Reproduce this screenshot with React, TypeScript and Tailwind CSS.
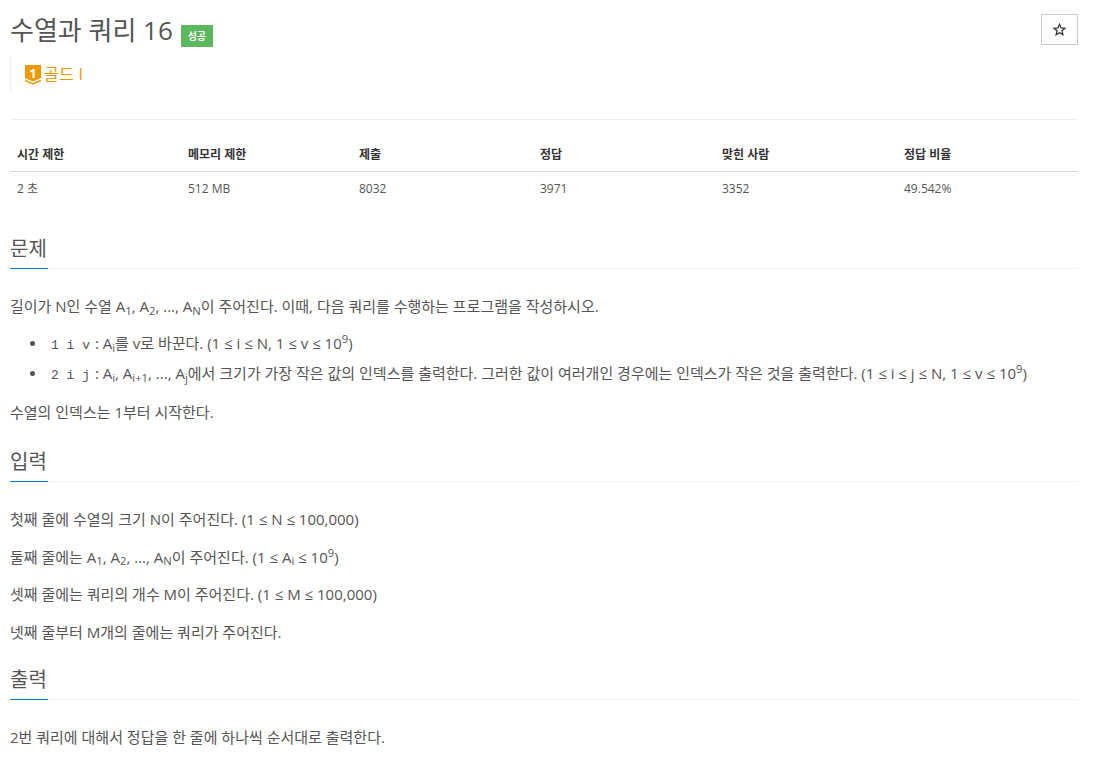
const sans = "font-['Open_Sans','Noto_Sans_CJK_KR',sans-serif]";

const stats = [
  { name: "시간 제한", value: "2 초", width: "w-[171px]" },
  { name: "메모리 제한", value: "512 MB", width: "w-[171px]" },
  { name: "제출", value: "8032", width: "w-[181px]" },
  { name: "정답", value: "3971", width: "w-[182px]" },
  { name: "맞힌 사람", value: "3352", width: "w-[182px]" },
  { name: "정답 비율", value: "49.542%", width: "w-[181px]" },
];

const bullet =
  "relative h-[30px] list-none before:absolute before:top-[10px] before:left-[-20px] before:size-[5px] before:rounded-full before:bg-[#555555] before:content-['']";

function SectionTitle({ children }: { children: React.ReactNode }) {
  return (
    <div className="border-b border-dotted border-[#e6e6e6]">
      <h2 className="-mb-px inline-block h-[35px] border-b border-[#0076c0] pr-px text-[20px] leading-[29px] font-normal text-[#555555]">
        {children}
      </h2>
    </div>
  );
}

function Code({ children }: { children: React.ReactNode }) {
  return (
    <code className="px-px font-['Liberation_Mono',monospace] text-[13px] text-[#555555]">
      {children}
    </code>
  );
}

function TierBadge() {
  return (
    <svg width="16" height="20" viewBox="0 0 16 20" className="mt-[2px] shrink-0">
      <path d="M0 0H16V13L8 16.5L0 13Z" fill="#ec9a00" />
      <path d="M0 15.5L8 19L16 15.5" fill="none" stroke="#ec9a00" strokeWidth="1.5" />
      <text x="8" y="12.5" textAnchor="middle" fontSize="13" fontWeight="700" fill="#ffffff" fontFamily="Open Sans, sans-serif">
        1
      </text>
    </svg>
  );
}

export default function App() {
  return (
    <div className={`${sans} min-h-[761px] bg-white pr-[25px] pl-[10px] text-[15px] leading-[24px] text-[#555555]`}>
      <div className="flex items-start justify-between pt-[11px]">
        <div className="flex items-start">
          <h1 className="text-[26px] leading-[38px] font-normal text-[#555555]">수열과 쿼리 16</h1>
          <span className="mt-[14px] ml-[8px] flex h-[22px] w-[32px] items-center justify-center bg-[#5cb85c] text-[10px] leading-none font-bold text-white">
            성공
          </span>
        </div>
        <button
          type="button"
          className="mt-[3px] flex h-[31px] w-[37px] items-center justify-center border border-[#cccccc] bg-white"
          aria-label="즐겨찾기"
        >
          <svg width="13" height="13" viewBox="0 0 24 24" fill="none" stroke="#333333" strokeWidth="2.4">
            <path d="M12 2.5l2.9 6.6 7.1.7-5.4 4.7 1.6 7-6.2-3.7-6.2 3.7 1.6-7L2 9.8l7.1-.7z" />
          </svg>
        </button>
      </div>

      <div className="mt-[7px] flex h-[36px] items-center gap-[3px] border-l border-[#eeeeee] pl-[14px] text-[16px] text-[#ec9a00]">
        <TierBadge />
        <span className="tracking-[0.3px]">골드 I</span>
      </div>

      <hr className="mt-[27px] border-[#eeeeee]" />

      <table className="mt-[20px] w-full border-collapse text-[12px] leading-[17px]">
        <thead>
          <tr className="border-b border-[#dddddd]">
            {stats.map((s) => (
              <th key={s.name} className={`${s.width} h-[31px] px-[7px] pb-[2px] text-left font-bold text-[#333333]`}>
                {s.name}
              </th>
            ))}
          </tr>
        </thead>
        <tbody>
          <tr>
            {stats.map((s) => (
              <td key={s.name} className="h-[34px] px-[7px] text-[#555555]">
                {s.value}
              </td>
            ))}
          </tr>
        </tbody>
      </table>

      <section className="mt-[29px]">
        <SectionTitle>문제</SectionTitle>
        <div className="mt-[25px]">
          <p>
            길이가 N인 수열 A<sub>1</sub>, A<sub>2</sub>, ..., A<sub>N</sub>이 주어진다. 이때, 다음 쿼리를 수행하는 프로그램을 작성하시오.
          </p>
          <ul className="mt-[13px] pl-[40px]">
            <li className={bullet}>
              <Code>1 i v</Code> : A<sub>i</sub>를 v로 바꾼다. (1 ≤ i ≤ N, 1 ≤ v ≤ 10<sup>9</sup>)
            </li>
            <li className={bullet}>
              <Code>2 i j</Code> : A<sub>i</sub>, A<sub>i+1</sub>, ..., A<sub>j</sub>에서 크기가 가장 작은 값의 인덱스를 출력한다. 그러한 값이 여러개인 경우에는 인덱스가 작은 것을 출력한다. (1 ≤ i ≤ j ≤ N, 1 ≤ v ≤ 10<sup>9</sup>)
            </li>
          </ul>
          <p className="mt-[9px]">수열의 인덱스는 1부터 시작한다.</p>
        </div>
      </section>

      <section className="mt-[23px]">
        <SectionTitle>입력</SectionTitle>
        <div className="mt-[25px] flex flex-col gap-[13.5px]">
          <p>첫째 줄에 수열의 크기 N이 주어진다. (1 ≤ N ≤ 100,000)</p>
          <p>
            둘째 줄에는 A<sub>1</sub>, A<sub>2</sub>, ..., A<sub>N</sub>이 주어진다. (1 ≤ A<sub>i</sub> ≤ 10<sup>9</sup>)
          </p>
          <p>셋째 줄에는 쿼리의 개수 M이 주어진다. (1 ≤ M ≤ 100,000)</p>
          <p>넷째 줄부터 M개의 줄에는 쿼리가 주어진다.</p>
        </div>
      </section>

      <section className="mt-[21px]">
        <SectionTitle>출력</SectionTitle>
        <p className="mt-[25px]">2번 쿼리에 대해서 정답을 한 줄에 하나씩 순서대로 출력한다.</p>
      </section>
    </div>
  );
}
